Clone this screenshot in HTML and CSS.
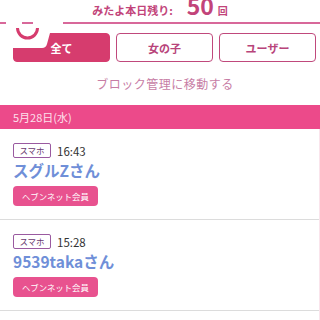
FILE: index.html
```html
<!DOCTYPE html>
<html lang="ja">
<head>
<meta charset="utf-8">
<link rel="stylesheet" href="styles.css">
</head>
<body>
<div class="page">
  <div class="header">
    <div class="h-inner">
      <span class="h-label">みたよ本日残り:</span>
      <span class="h-count">50</span>
      <span class="h-unit">回</span>
    </div>
  </div>
  <div class="tabs">
    <div class="tab active">全て</div>
    <div class="tab">女の子</div>
    <div class="tab">ユーザー</div>
  </div>
  <div class="block-link">ブロック管理に移動する</div>
  <div class="date-bar">5月28日(水)</div>
  <div class="list">
    <div class="card">
      <div class="meta"><span class="tag">スマホ</span><span class="time">16:43</span></div>
      <div class="name">スグルZさん</div>
      <div class="pill">ヘブンネット会員</div>
    </div>
    <div class="card">
      <div class="meta"><span class="tag">スマホ</span><span class="time">15:28</span></div>
      <div class="name">9539takaさん</div>
      <div class="pill">ヘブンネット会員</div>
    </div>
    <div class="card empty"></div>
  </div>
  <svg class="overlay" width="70" height="40" viewBox="0 0 70 40">
    <path d="M6,3 H63 V19 H50 L47,30 Q46,34 42,34 H6 Z" fill="#ffffff"/>
    <rect x="22" y="8" width="11" height="2" fill="#d8689a"/>
    <path d="M17.5,14 A10,10 0 0 0 37.5,14" fill="none" stroke="#d63c6e" stroke-width="3"/>
  </svg>
</div>
</body>
</html>
```

FILE: styles.css
```css
html, body {
  margin: 0;
  padding: 0;
  background: #ffffff;
}
body {
  font-family: "Noto Sans CJK JP", "Noto Sans", sans-serif;
  width: 320px;
  height: 320px;
  overflow: hidden;
}
.page {
  position: relative;
  width: 320px;
}
.header {
  display: flex;
  justify-content: center;
  box-sizing: border-box;
  height: 24px;
  border-bottom: 2px solid #d8689a;
  color: #c2447a;
  font-weight: bold;
}
.h-inner {
  display: flex;
  align-items: baseline;
  margin-top: -2px;
  line-height: 14px;
}
.h-label {
  font-size: 11px;
}
.h-count {
  font-size: 23px;
  margin-left: 14px;
  line-height: 14px;
}
.h-unit {
  font-size: 10px;
  margin-left: 4px;
}
.tabs {
  display: flex;
  gap: 6px;
  padding: 9px 4px 0 13px;
}
.tab {
  width: 97px;
  height: 29px;
  box-sizing: border-box;
  border: 1.5px solid #c0497c;
  border-radius: 4px;
  display: flex;
  align-items: center;
  justify-content: center;
  font-size: 11px;
  font-weight: bold;
  color: #b8447a;
}
.tab.active {
  background: #d63c6e;
  border-color: #d63c6e;
  color: #ffffff;
}
.block-link {
  text-align: center;
  font-size: 12px;
  letter-spacing: 0.5px;
  color: #c77da5;
  line-height: 16px;
  margin-top: 14px;
  padding-left: 10px;
  height: 29px;
}
.date-bar {
  background: #ec4a8a;
  color: #fde0ec;
  font-size: 11px;
  height: 24px;
  line-height: 24px;
  padding-left: 13px;
}
.list {
  width: 319px;
  border-right: 1px solid #fae4ec;
}
.card {
  padding: 14px 13px 13px;
  border-bottom: 1px solid #dcdcdc;
  background: #ffffff;
}
.meta {
  display: flex;
  align-items: center;
  height: 15px;
}
.tag {
  box-sizing: border-box;
  height: 15px;
  width: 38px;
  border: 1px solid #9a5aa0;
  border-radius: 2px;
  font-size: 8.5px;
  line-height: 13px;
  text-align: center;
  color: #6a3a70;
}
.time {
  margin-left: 6px;
  font-size: 11.5px;
  color: #333333;
}
.name {
  font-size: 15.5px;
  line-height: 22px;
  margin-top: 1px;
  color: #6f8fd8;
  font-weight: bold;
}
.pill {
  display: inline-block;
  margin-top: 5px;
  height: 20px;
  line-height: 20px;
  padding: 0 9px;
  border-radius: 4px;
  background: #e8528f;
  color: #ffffff;
  font-size: 8.4px;
}
.card.empty {
  height: 40px;
  border-bottom: none;
}
.overlay {
  position: absolute;
  top: 14px;
  left: 0;
}
```
